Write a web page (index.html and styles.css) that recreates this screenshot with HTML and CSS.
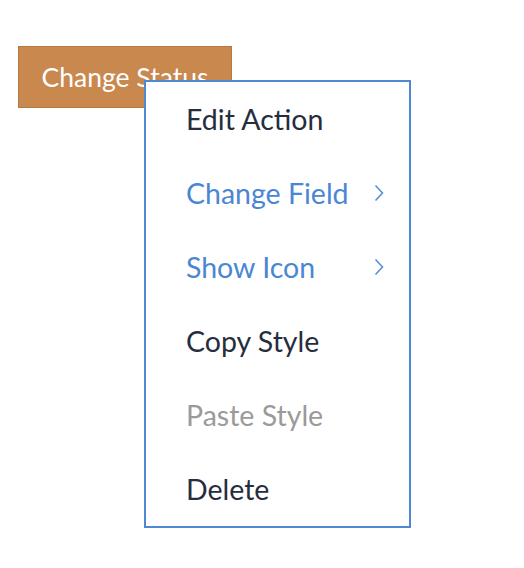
FILE: index.html
```html
<!DOCTYPE html>
<html>
<head>
<meta charset="utf-8">
<link rel="stylesheet" href="styles.css">
</head>
<body>
<div class="stage">
  <button class="action-btn">Change Status</button>
  <ul class="menu">
    <li class="item">Edit Action</li>
    <li class="item sub">Change Field
      <svg class="chev" width="10" height="18" viewBox="0 0 10 18"><path d="M1.5 1.5 L8.5 9 L1.5 16.5" fill="none" stroke="currentColor" stroke-width="1.6"/></svg>
    </li>
    <li class="item sub">Show Icon
      <svg class="chev" width="10" height="18" viewBox="0 0 10 18"><path d="M1.5 1.5 L8.5 9 L1.5 16.5" fill="none" stroke="currentColor" stroke-width="1.6"/></svg>
    </li>
    <li class="item">Copy Style</li>
    <li class="item disabled">Paste Style</li>
    <li class="item">Delete</li>
  </ul>
</div>
</body>
</html>
```
FILE: styles.css
```css
html, body {
  margin: 0;
  padding: 0;
  background: #ffffff;
}
body {
  font-family: Lato, "Open Sans", sans-serif;
}
.stage {
  position: relative;
  width: 524px;
  height: 568px;
}
.action-btn {
  margin: 46px 0 0 18px;
  width: 214px;
  height: 62px;
  background: #c9884e;
  border: 1px solid #b57941;
  color: #ffffff;
  font-family: Lato, sans-serif;
  font-size: 26.5px;
  padding: 0;
  text-align: center;
  cursor: pointer;
}
.menu {
  position: absolute;
  left: 144px;
  top: 80px;
  width: 263px;
  margin: 0;
  padding: 0;
  list-style: none;
  background: #ffffff;
  border: 2px solid #4f88d3;
}
.item {
  height: 74px;
  display: flex;
  align-items: center;
  justify-content: space-between;
  padding: 0 25px 0 40px;
  font-size: 28.5px;
  color: #262d3d;
}
.item.sub {
  color: #4a86d3;
}
.item.disabled {
  color: #9a9a9a;
}
.chev {
  display: block;
  color: #5a8fd5;
}
```
